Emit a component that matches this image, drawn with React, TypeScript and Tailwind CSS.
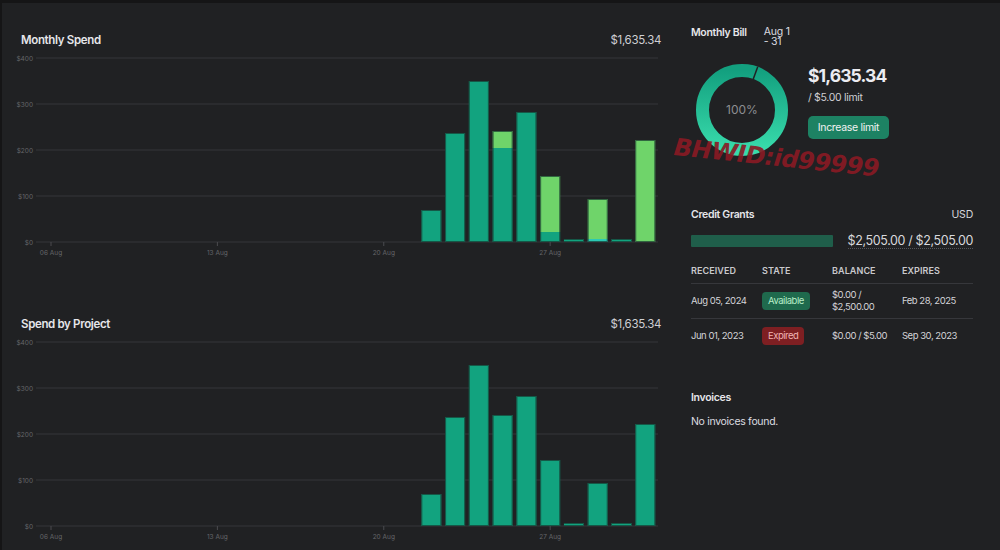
import React from "react";

type Seg = { h: number; c: string };

const TEAL = "#12a37f";
const LIME = "#6fd46a";
const CYAN = "#2cc9b4";

// pixel heights per day, 22 Aug .. 31 Aug
const monthly: Seg[][] = [
  [{ h: 32, c: TEAL }],
  [{ h: 109, c: TEAL }],
  [{ h: 161, c: TEAL }],
  [{ h: 94, c: TEAL }, { h: 17, c: LIME }],
  [{ h: 130, c: TEAL }],
  [{ h: 10, c: TEAL }, { h: 56, c: LIME }],
  [{ h: 3, c: TEAL }],
  [{ h: 3, c: CYAN }, { h: 40, c: LIME }],
  [{ h: 3, c: TEAL }],
  [{ h: 102, c: LIME }],
];

const byProject: Seg[][] = [32, 109, 161, 111, 130, 66, 3, 43, 3, 102].map((h) => [
  { h, c: TEAL },
]);

const PITCH = 23.77;
const dayX = (d: number) => 51 + (d - 6) * PITCH;

function BarChart({ bars }: { bars: Seg[][] }) {
  const base = 190;
  const ticks = [
    { d: 6, label: "06 Aug" },
    { d: 13, label: "13 Aug" },
    { d: 20, label: "20 Aug" },
    { d: 27, label: "27 Aug" },
  ];
  return (
    <svg width={670} height={212} className="block">
      {[0, 100, 200, 300, 400].map((v) => {
        const y = base - v * 0.46;
        return (
          <g key={v}>
            <line x1={36} x2={658} y1={y} y2={y} stroke="#35363a" strokeWidth={1} />
            <text
              x={33}
              y={y + 2.5}
              textAnchor="end"
              fontSize={6.5}
              fill="#65666a"
              fontFamily="Inter, sans-serif"
            >
              ${v}
            </text>
          </g>
        );
      })}
      {ticks.map((t) => (
        <g key={t.d}>
          <line x1={dayX(t.d)} x2={dayX(t.d)} y1={base} y2={base + 4} stroke="#4a4b4f" />
          <text
            x={dayX(t.d)}
            y={base + 12.5}
            textAnchor="middle"
            fontSize={6.5}
            fill="#65666a"
            fontFamily="Inter, sans-serif"
          >
            {t.label}
          </text>
        </g>
      ))}
      {bars.map((segs, i) => {
        const cx = dayX(22 + i);
        const x = cx - 10;
        let y = base;
        const total = segs.reduce((s, g) => s + g.h, 0);
        return (
          <g key={i}>
            {segs.map((s, j) => {
              y -= s.h;
              return <rect key={j} x={x} y={y} width={20} height={s.h} fill={s.c} />;
            })}
            <rect
              x={x + 0.5}
              y={base - total + 0.5}
              width={19}
              height={total - 1}
              fill="none"
              stroke="#17382f"
              strokeOpacity={0.7}
            />
          </g>
        );
      })}
    </svg>
  );
}

function ChartSection({ title, bars }: { title: string; bars: Seg[][] }) {
  return (
    <section className="h-[284px] pt-[30px]">
      <div className="flex h-[16px] items-center justify-between pl-[19px] pr-[9px]">
        <h2 className="text-[11.5px] font-semibold tracking-[-0.03em] text-[#e6e6ea]">{title}</h2>
        <span className="text-[11.5px] tracking-[-0.03em] text-[#cfcfd3]">$1,635.34</span>
      </div>
      <div className="-ml-[2px] mt-[3px]">
        <BarChart bars={bars} />
      </div>
    </section>
  );
}

function Donut() {
  const r = 39.5;
  const a = (20 * Math.PI) / 180;
  return (
    <svg width={100} height={100} className="block">
      <defs>
        <linearGradient id="ring" x1="0" y1="0" x2="0" y2="1">
          <stop offset="0%" stopColor="#13a07f" />
          <stop offset="100%" stopColor="#38dbab" />
        </linearGradient>
      </defs>
      <circle cx={50} cy={50} r={r} fill="none" stroke="url(#ring)" strokeWidth={13} />
      <line
        x1={50 + Math.sin(a) * 33}
        y1={50 - Math.cos(a) * 33}
        x2={50 + Math.sin(a) * 46}
        y2={50 - Math.cos(a) * 46}
        stroke="#202123"
        strokeWidth={1.5}
      />
      <text
        x={50}
        y={54}
        textAnchor="middle"
        fontSize={12}
        fill="#8d8e92"
        fontFamily="Inter, sans-serif"
      >
        100%
      </text>
    </svg>
  );
}

const grants = [
  {
    received: "Aug 05, 2024",
    state: "Available",
    balance: "$0.00 / $2,500.00",
    expires: "Feb 28, 2025",
  },
  {
    received: "Jun 01, 2023",
    state: "Expired",
    balance: "$0.00 / $5.00",
    expires: "Sep 30, 2023",
  },
];

export default function App() {
  return (
    <div className="relative flex h-[550px] w-[1000px] overflow-hidden border-t-[3px] border-l-[2px] border-[#151516] bg-[#202123] font-['Inter','Noto_Sans',sans-serif] text-[#e6e6ea]">
      <div className="w-[668px] shrink-0">
        <ChartSection title="Monthly Spend" bars={monthly} />
        <ChartSection title="Spend by Project" bars={byProject} />
      </div>

      <div className="flex w-[330px] flex-col pl-[21px] pr-[27px] pt-[24px]">
        <div className="flex items-start">
          <h2 className="text-[10.5px] leading-[12px] font-semibold tracking-[-0.03em]">Monthly Bill</h2>
          <span className="ml-[17px] w-[30px] text-[10.5px] leading-[10px] tracking-[-0.02em] text-[#dcdce0]">Aug 1 - 31</span>
        </div>

        <div className="mt-[13px] flex items-start">
          <div className="ml-[1px]">
            <Donut />
          </div>
          <div className="ml-[16px] flex flex-col items-start pt-[5px]">
            <div className="text-[17.5px] leading-[22px] font-bold tracking-[-0.05em] text-[#ececf1]">$1,635.34</div>
            <div className="mt-[4px] text-[10.5px] leading-[14px] tracking-[-0.03em] text-[#cfcfd3]">/ $5.00 limit</div>
            <button className="mt-[11px] flex h-[23px] w-[81px] items-center justify-center rounded-[5px] bg-[#1d8263] text-[10.5px] tracking-[-0.03em] text-[#f2f2f2]">
              Increase limit
            </button>
          </div>
        </div>

        <div className="mt-[48px] flex h-[14px] items-center justify-between">
          <h2 className="text-[10.5px] font-semibold tracking-[-0.03em]">Credit Grants</h2>
          <span className="text-[10.5px] tracking-[-0.02em] text-[#d6d6da]">USD</span>
        </div>

        <div className="mt-[11px] flex h-[16px] items-center justify-between">
          <div className="h-[12px] w-[142px] rounded-[1px] bg-[#1f5e4a]" />
          <span className="border-b border-dotted border-[#55565a] text-[12.5px] leading-[15px] tracking-[-0.03em] text-[#d9d9dd]">
            $2,505.00 / $2,505.00
          </span>
        </div>

        <div className="mt-[9px] grid h-[26px] grid-cols-[71px_70px_70px_1fr] items-center border-b border-[#36373b] text-[9px] font-semibold tracking-[0.01em] text-[#c9c9cd]">
          <span>RECEIVED</span>
          <span>STATE</span>
          <span>BALANCE</span>
          <span>EXPIRES</span>
        </div>

        {grants.map((g, i) => (
          <div
            key={g.received}
            className={`grid grid-cols-[71px_70px_70px_1fr] items-center text-[9.5px] leading-[12px] tracking-[-0.05em] text-[#d4d4d8] ${
              i === 0 ? "h-[35px] border-b border-[#36373b]" : "h-[33px]"
            }`}
          >
            <span>{g.received}</span>
            <span>
              {g.state === "Available" ? (
                <span className="inline-flex h-[18px] items-center rounded-[4px] bg-[#1f6a4d] px-[6px] text-[#b8eec8]">
                  Available
                </span>
              ) : (
                <span className="inline-flex h-[18px] items-center rounded-[4px] bg-[#7e1f22] px-[6px] text-[#f1b3b3]">
                  Expired
                </span>
              )}
            </span>
            <span className="pr-[8px]">{g.balance}</span>
            <span>{g.expires}</span>
          </div>
        ))}

        <h2 className="mt-[39px] text-[10.5px] leading-[14px] font-semibold tracking-[-0.03em]">Invoices</h2>
        <p className="mt-[10px] text-[10.5px] leading-[14px] tracking-[-0.03em] text-[#dcdce0]">No invoices found.</p>
      </div>

      {/* watermark stamp over the bill card */}
      <div className="pointer-events-none absolute left-[672px] top-[126px] origin-left rotate-[6deg] font-['DejaVu_Sans',sans-serif] text-[24px] font-bold italic tracking-[-0.02em] text-[#8a1a24] opacity-90">
        BHWID:id99999
      </div>
    </div>
  );
}
